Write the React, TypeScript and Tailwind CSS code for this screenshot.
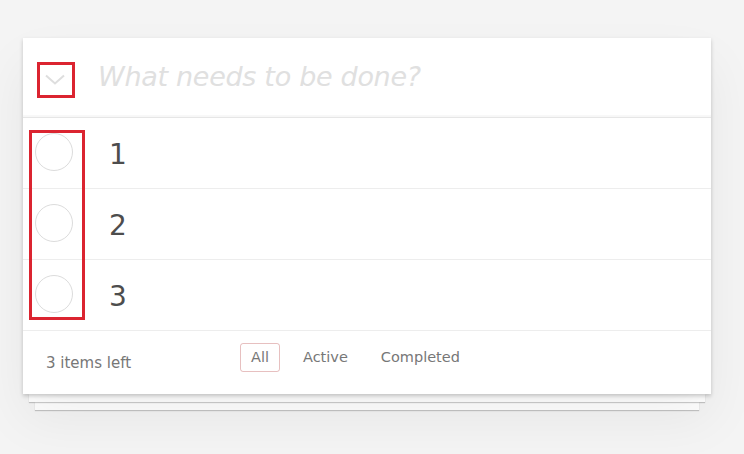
import React from "react";

const todos = ["1", "2", "3"];

function Chevron() {
  return (
    <svg width="22" height="11" viewBox="0 0 22 11" aria-hidden="true">
      <path d="M2 1.5l9 8 9-8" fill="none" stroke="#dedede" strokeWidth="2" />
    </svg>
  );
}

export default function App() {
  return (
    <div
      className="min-h-[454px] bg-[#f4f4f4] pt-[38px]"
      style={{ fontFamily: '"DejaVu Sans", Verdana, sans-serif' }}
    >
      <div className="relative ml-[23px] w-[688px]">
        {/* card */}
        <section className="relative z-10 bg-white shadow-[0_2px_4px_rgba(0,0,0,0.2),0_25px_50px_rgba(0,0,0,0.06)]">
          {/* header */}
          <header className="flex h-[80px] items-center border-b border-[#e6e6e6] shadow-[inset_0_-2px_1px_rgba(0,0,0,0.03)]">
            <div className="flex w-[64px] items-center justify-center pt-[3px]">
              <Chevron />
            </div>
            <div className="pl-[11px] text-[27px] italic text-[#e0e0e0] tracking-[-0.3px]">
              What needs to be done?
            </div>
          </header>

          {/* list */}
          <ul>
            {todos.map((t) => (
              <li
                key={t}
                className="flex h-[71px] items-center border-b border-[#ededed]"
              >
                <div className="flex w-[61px] justify-center pl-[1px] -mt-[2px]">
                  <div className="h-[38px] w-[38px] rounded-full border-[1.5px] border-[#dcdcdc]" />
                </div>
                <span className="pl-[25px] pt-[4px] text-[28px] text-[#4d4d4d] leading-none">
                  {t}
                </span>
              </li>
            ))}
          </ul>

          {/* footer */}
          <footer className="flex h-[63px] items-center text-[14.5px] text-[#777]">
            <span className="pl-[23px] pt-[1px] w-[217px] text-[15px]">3 items left</span>
            <div className="flex items-center gap-[23px] -mt-[10px]">
              <span className="rounded-[3px] border border-[rgba(175,47,47,0.3)] px-[10px] py-[3px]">
                All
              </span>
              <span className="py-[3px]">Active</span>
              <span className="py-[3px] pl-[10px]">Completed</span>
            </div>
          </footer>
        </section>

        {/* stacked paper */}
        <div className="relative z-[5] mx-[6px] h-[8px] bg-white shadow-[0_1px_1px_rgba(0,0,0,0.2)]" />
        <div className="relative z-[4] mx-[12px] h-[8px] bg-white shadow-[0_1px_1px_rgba(0,0,0,0.2)]" />

        {/* annotation boxes */}
        <div className="pointer-events-none absolute left-[14px] top-[24px] z-20 h-[36px] w-[38px] border-[3px] border-[#db2430]" />
        <div className="pointer-events-none absolute left-[6px] top-[92px] z-20 h-[190px] w-[56px] border-[3px] border-[#db2430]" />
      </div>
    </div>
  );
}
